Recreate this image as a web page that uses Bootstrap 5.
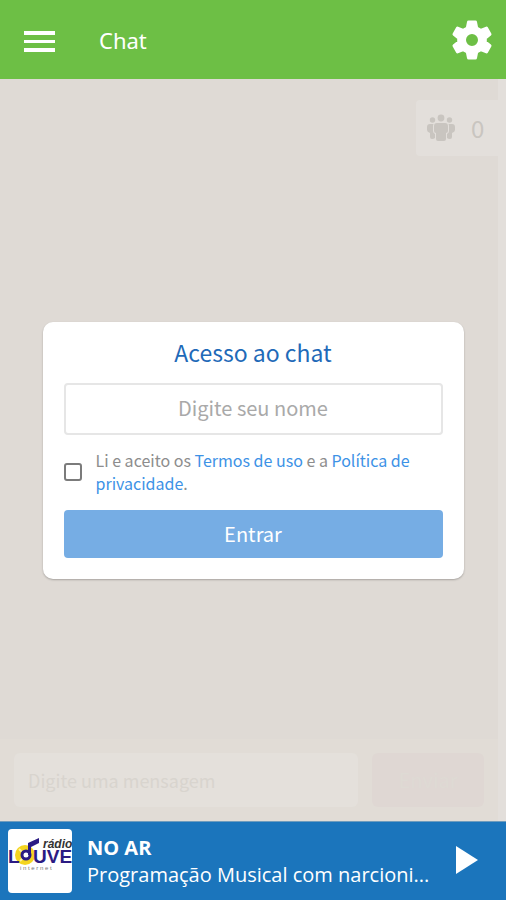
<!DOCTYPE html>
<html lang="pt-BR">
<head>
<meta charset="utf-8">
<meta name="viewport" content="width=device-width, initial-scale=1">
<title>Chat</title>
<link href="https://cdn.jsdelivr.net/npm/bootstrap@5.3.0/dist/css/bootstrap.min.css" rel="stylesheet">
<style>
  body { font-family: "Open Sans", "Noto Sans", sans-serif; background: #dfdad5; }
  .app-bar { background: #6dbf45; height: 79px; padding: 0 14px 0 24px; }
  .app-title { font-family: "Noto Sans", sans-serif; font-size: 22px; line-height: 32px; color: #fff; margin-left: 44px; }
  .icon-btn { background: none; border: 0; padding: 0; line-height: 0; color: #fff; }
  .source-font { font-family: "Noto Sans CJK SC", "Noto Sans", sans-serif; }
  .chat-area { border-right: 8px solid #e3dfdb; }
  .online-box { background: #e3dfdb; width: 82px; height: 56px; margin-top: 21px; padding-left: 11px; gap: 16px; color: #c9c5c0; font-size: 24px; border-radius: 4px 0 0 4px; }
  .composer { background: #e1dcd6; padding: 14px; gap: 14px; }
  .composer .form-control { background: #e4e0db; border: 0; height: 54px; padding: 0 14px; font-size: 18px; color: #d4d0cb; }
  .composer .form-control::placeholder { color: #d8d4ce; opacity: 1; }
  .send-btn, .send-btn:hover { background: #dfd7d3; color: #dedad4; border: 0; width: 112px; height: 54px; font-size: 20px; }
  .access-card { width: 100%; max-width: 421px; border: 0; border-radius: 10px; padding: 13px 21px 21px; box-shadow: 0 1px 2px rgba(0,0,0,.25); }
  .access-title { font-size: 23px; line-height: 34px; color: #1f6ab8; margin-bottom: 14px; font-weight: 400; }
  .access-card .form-control { height: 52px; border: 2px solid #e6e6e6; border-radius: 4px; font-size: 20px; padding: 0 12px 2px; }
  .access-card .form-control::placeholder { color: #a9a9a9; opacity: 1; }
  .terms { margin: 14px 0 15px; gap: 14px; font-size: 16px; line-height: 23px; color: #8d8d8d; }
  .terms a { color: #3d92e6; text-decoration: none; }
  .terms .form-check-input { width: 18px; height: 18px; border: 2px solid #7b7b7b; border-radius: 3px; }
  .enter-btn, .enter-btn:hover { background: #76ade4; color: #fff; height: 48px; border: 0; border-radius: 4px; font-size: 20px; line-height: 1; }
  .player { background: #1b75bc; height: 79px; padding: 0 27px 0 8px; border-top: 1px solid #6f9cbd; color: #fff; }
  .cover { border-radius: 4px; background: #fff; }
  .on-air { font-size: 20px; line-height: 27px; margin: 0 16px 0 15px; }
  .cover text { font-family: "Liberation Sans", Arial, sans-serif; }
</style>
<script src="https://cdn.jsdelivr.net/npm/bootstrap@5.3.0/dist/js/bootstrap.bundle.min.js"></script>
</head>
<body>
<div class="d-flex flex-column vh-100">
  <header class="app-bar d-flex align-items-center flex-shrink-0">
    <button class="icon-btn" type="button" aria-label="Menu">
      <svg width="31" height="24" viewBox="0 0 31 24" fill="currentColor"><path d="M0 3h31v4H0zM0 12h31v3H0zM0 20h31v4H0z"/></svg>
    </button>
    <h1 class="app-title mb-0 fw-normal">Chat</h1>
    <button class="icon-btn ms-auto" type="button" aria-label="Configurações">
      <svg width="40" height="42" viewBox="0 0 40 42" fill="currentColor" stroke="currentColor" stroke-width="3" stroke-linejoin="round"><path fill-rule="evenodd" d="M16.500 3h7l1.200 6 4 2.300 5.800-2.200 3.500 6.200-4.700 3.700v4l4.700 3.700-3.500 6.200-5.800-2.200-4 2.300-1.200 6h-7l-1.200-6-4-2.300-5.800 2.200L2 26.700 6.700 23v-4L2 15.300l3.500-6.200 5.800 2.200 4-2.300zM20 13.500a7.500 7.500 0 1 0 0 15 7.500 7.500 0 0 0 0-15z"/></svg>
    </button>
  </header>

  <main class="position-relative flex-grow-1 d-flex flex-column chat-area">
    <div class="online-box source-font d-flex align-items-center align-self-end">
      <svg width="28" height="28" viewBox="0 0 28 28" fill="currentColor" aria-hidden="true"><circle cx="14" cy="4" r="3.400"/><circle cx="5.500" cy="6" r="2.700"/><circle cx="22.500" cy="6" r="2.700"/><path d="M10 9h8q3 0 3 3v5q0 2-2 2v6q0 2-2 2h-6q-2 0-2-2v-6q-2 0-2-2v-5q0-3 3-3zM3 10h3.500Q6 11 6 12v5q0 2 2 3v4q-1 1-3 1-2 0-2-2v-4q-3-1-3-3v-3q0-3 3-3zM25 10h-3.500q.5 1 .5 2v5q0 2-2 3v4q1 1 3 1 2 0 2-2v-4q3-1 3-3v-3q0-3-3-3z"/></svg>
      <span>0</span>
    </div>
    <form class="composer source-font d-flex mt-auto">
      <input class="form-control" type="text" placeholder="Digite uma mensagem" aria-label="Digite uma mensagem">
      <button class="btn send-btn flex-shrink-0" type="button">Enviar</button>
    </form>

    <div class="position-absolute top-0 start-0 w-100 h-100 d-flex align-items-center justify-content-center ps-2">
      <form class="card access-card source-font">
        <h2 class="access-title text-center">Acesso ao chat</h2>
        <input class="form-control text-center" type="text" placeholder="Digite seu nome" aria-label="Digite seu nome">
        <div class="terms d-flex align-items-center">
          <input class="form-check-input flex-shrink-0 m-0" type="checkbox" id="accept">
          <label for="accept">Li e aceito os <a href="#termos">Termos de uso</a> e a <a href="#privacidade">Política de privacidade</a>.</label>
        </div>
        <button class="btn enter-btn w-100" type="button">Entrar</button>
      </form>
    </div>
  </main>

  <footer class="player d-flex align-items-center flex-shrink-0">
    <svg class="cover flex-shrink-0" width="64" height="64" viewBox="0 0 64 64" role="img" aria-label="Rádio Louve">
      <circle cx="17" cy="26" r="10" fill="#f4d51f"/>
      <path d="M11 20l4 4M12 32l5-5" stroke="#fff3a0" stroke-width="2"/>
      <text x="0" y="34" font-size="19" font-weight="700" fill="#2b1b83">L</text>
      <text x="25" y="34" font-size="19" font-weight="700" fill="#2b1b83">UVE</text>
      <circle cx="18" cy="26" r="4" fill="#fff" stroke="#2b1b83" stroke-width="3"/>
      <path d="M20 26V14l11-5v5l-8 4v8z" fill="#2b1b83"/>
      <text x="35" y="19" font-size="12" font-style="italic" font-weight="700" fill="#333">rádio</text>
      <text x="12" y="41" font-size="6" fill="#777">i n t e r n e t</text>
    </svg>
    <div class="on-air flex-grow-1 overflow-hidden">
      <div class="fw-bold">NO AR</div>
      <div class="text-truncate">Programação Musical com narcioni...</div>
    </div>
    <button class="icon-btn" type="button" aria-label="Tocar">
      <svg width="24" height="30" viewBox="0 0 24 30" fill="currentColor"><path d="M1 0v28l22-14z"/></svg>
    </button>
  </footer>
</div>
</body>
</html>
